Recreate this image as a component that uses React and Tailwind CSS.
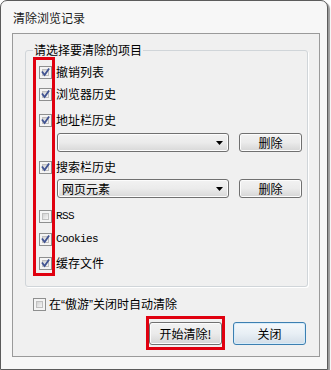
import React from "react";

function Check({ checked = true }) {
  return (
    <span className="relative flex h-[13px] w-[13px] shrink-0 items-center justify-center border border-[#8e8f8f] bg-[#f4f4f4]">
      <span className="absolute inset-[2px] border border-[#c0c0c0] bg-gradient-to-br from-[#d2d2d2] to-[#f6f6f6]" />
      {checked && (
        <svg width="11" height="11" viewBox="0 0 11 11" className="relative">
          <path d="M2.5 5.2 L4.6 8 L8.6 2.2" fill="none" stroke="#3f5291" strokeWidth="1.8" strokeLinecap="square" />
        </svg>
      )}
    </span>
  );
}

function Row({ label, checked = true, mono = false, className = "" }) {
  return (
    <div className={"flex h-[16px] items-center " + className}>
      <Check checked={checked} />
      <span
        className={
          "ml-[4px] leading-[16px] " +
          (mono ? "font-['Liberation_Mono',monospace] text-[11px] tracking-[-0.6px]" : "")
        }
      >
        {label}
      </span>
    </div>
  );
}

function Btn({ children, className = "" }) {
  return (
    <div
      className={
        "flex items-center justify-center rounded-[3px] border border-[#707070] bg-gradient-to-b from-[#f2f2f2] via-[#ebebeb] to-[#d5d5d5] shadow-[inset_0_0_0_1px_#fcfcfc] " +
        className
      }
    >
      {children}
    </div>
  );
}

function Combo({ text = "" }) {
  return (
    <div className="flex h-[19px] w-[172px] items-center justify-between rounded-[3px] border border-[#707070] bg-gradient-to-b from-[#f2f2f2] via-[#ebebeb] to-[#d8d8d8] pl-[4px] pr-[5px] shadow-[inset_0_0_0_1px_#fcfcfc]">
      <span className="leading-[16px]">{text}</span>
      <svg width="7" height="4" viewBox="0 0 7 4">
        <path d="M0 0 H7 L3.5 4 Z" fill="#000" />
      </svg>
    </div>
  );
}

export default function App() {
  return (
    <div className="relative h-[370px] w-[331px] bg-white font-['Noto_Sans_CJK_SC',sans-serif] text-[12px] text-black">
      <div className="flex h-[370px] w-[328px] flex-col rounded-t-[7px] border border-[#5c5c5c] bg-[#f7f7f7] shadow-[2px_2px_1px_#9a9a9a]">
        <div className="h-[32px] pl-[12px] pt-[10px] leading-[14px] text-[#1a1a1a]">清除浏览记录</div>
        <div className="ml-[11px] mr-[7px] flex h-[324px] flex-col border border-[#9a9a9a] bg-[#f0f0f0]">
          <div className="relative ml-[12px] mr-[11px] mt-[16px] h-[237px] rounded-[3px] border border-[#d0d5d9] shadow-[1px_1px_0_#ffffff] pl-[13px] pt-[13px]">
            <span className="absolute left-[7px] top-[-9px] bg-[#f0f0f0] px-[1px] leading-[16px]">请选择要清除的项目</span>
            <Row label="撤销列表" />
            <Row label="浏览器历史" className="mt-[6px]" />
            <Row label="地址栏历史" className="mt-[10px]" />
            <div className="ml-[18px] mt-[5px] flex items-center">
              <Combo />
              <Btn className="ml-[10px] h-[19px] w-[63px]">删除</Btn>
            </div>
            <Row label="搜索栏历史" className="mt-[7px]" />
            <div className="ml-[18px] mt-[4px] flex items-center">
              <Combo text="网页元素" />
              <Btn className="ml-[10px] h-[19px] w-[63px]">删除</Btn>
            </div>
            <Row label="RSS" checked={false} mono className="mt-[10px]" />
            <Row label="Cookies" mono className="mt-[7px]" />
            <Row label="缓存文件" className="mt-[8px]" />
            <span className="absolute left-[7px] top-[6px] h-[219px] w-[22px] border-[3px] border-[#e0000f]" />
          </div>
          <div className="ml-[20px] mt-[9px] flex h-[16px] items-center">
            <Check checked={false} />
            <span className="ml-[3px] leading-[16px]">
              在<span className="font-['Liberation_Sans',sans-serif]">“</span>傲游<span className="font-['Liberation_Sans',sans-serif]">”</span>关闭时自动清除
            </span>
          </div>
          <div className="mr-[13px] mt-[10px] flex justify-end gap-[11px]">
            <div className="relative">
              <Btn className="h-[23px] w-[73px]">开始清除!</Btn>
              <span className="absolute -inset-[3px] -top-[6px] -bottom-[5px] border-[3px] border-[#e0000f]" />
            </div>
            <div className="flex h-[23px] w-[73px] items-center justify-center rounded-[3px] border border-[#3c7fb1] bg-gradient-to-b from-[#f4f8fb] via-[#e8eff5] to-[#d3dee8] shadow-[inset_0_0_0_1px_#d6ecfa]">
              关闭
            </div>
          </div>
        </div>
      </div>
    </div>
  );
}
